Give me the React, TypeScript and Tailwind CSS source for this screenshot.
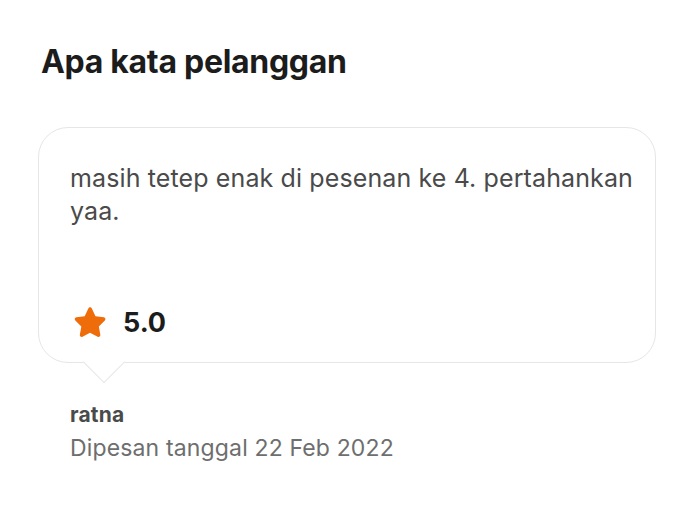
export default function App() {
	return (
		<div className="min-h-[517px] w-[689px] bg-white px-[41px] pt-[41px] font-['Inter',sans-serif]">
			<h2 className="text-[32px] font-bold leading-[42px] tracking-[-0.3px] text-[#1c1c1c]">
				Apa kata pelanggan
			</h2>
			{/* CARD */}
			<div className="relative ml-[-3px] mt-[44px] w-[618px]">
				<div className="flex h-[236px] flex-col justify-between rounded-[30px] border border-[#e6e6e6] bg-white pb-[19px] pl-[31px] pr-[12px] pt-[34px]">
					<p className="text-[25px] leading-[33px] tracking-[0.12px] text-[#4a4a4a]">
						masih tetep enak di pesenan ke 4. pertahankan yaa.
					</p>
					<div className="relative z-10 flex items-center gap-[13px]">
						<svg viewBox="0 0 24 24" className="h-[40px] w-[40px]">
							<path
								d="M12 2.6c.5 0 .9.3 1.1.7l2.2 4.6 5 .7c.9.1 1.3 1.2.6 1.9l-3.6 3.6.9 5c.2.9-.8 1.6-1.6 1.2L12 17.9l-4.5 2.4c-.8.4-1.8-.3-1.6-1.2l.9-5-3.6-3.6c-.7-.7-.3-1.8.6-1.9l5-.7 2.2-4.6c.2-.4.6-.7 1.1-.7z"
								fill="#ef6c0b"
							/>
						</svg>
						<span className="text-[27px] font-bold text-[#1c1c1c]">5.0</span>
					</div>
				</div>
				{/* TAIL */}
				<div className="absolute left-[51px] top-[220px] h-[30px] w-[30px] rotate-45 border-b border-r border-[#e6e6e6] bg-white" />
			</div>
			{/* AUTHOR */}
			<div className="mt-[38px] pl-[29px]">
				<div className="text-[21px] font-bold leading-[28px] tracking-[0.2px] text-[#4a4a4a]">ratna</div>
				<div className="mt-[4px] text-[23px] leading-[30px] tracking-[0.15px] text-[#6e6e6e]">
					Dipesan tanggal 22 Feb 2022
				</div>
			</div>
		</div>
	)
}
